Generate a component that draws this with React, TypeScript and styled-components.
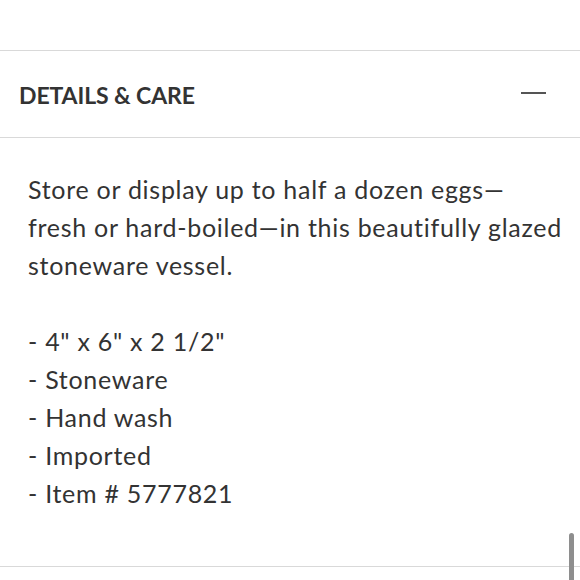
import React from "react";
import styled, { createGlobalStyle } from "styled-components";

const Global = createGlobalStyle`
  html, body { margin: 0; padding: 0; background: #fff; }
  body { font-family: Lato, "Open Sans", sans-serif; color: #333; overflow: hidden; }
`;

const Page = styled.div`
  width: 580px;
  height: 580px;
  position: relative;
  overflow: hidden;
  padding-top: 50px;
  box-sizing: border-box;
`;

const Section = styled.section`
  border-top: 1px solid #d9d9d9;
  border-bottom: 1px solid #d9d9d9;
`;

const Header = styled.div`
  height: 87px;
  display: flex;
  align-items: center;
  justify-content: space-between;
  padding: 1px 34px 0 19px;
  box-sizing: border-box;
  border-bottom: 1px solid #d9d9d9;
`;

const Title = styled.h2`
  margin: 0;
  font-size: 23px;
  font-weight: 700;
  letter-spacing: -0.1px;
  color: #333;
`;

const Minus = styled.span`
  display: block;
  width: 25px;
  height: 2px;
  margin-top: -3px;
  background: #555;
`;

const Body = styled.div`
  padding: 32px 6px 22px 28px;
  font-size: 25px;
  line-height: 38px;
  letter-spacing: 0.72px;
  color: #333;
  white-space: pre-line;
  height: 428px;
  box-sizing: border-box;
`;

const Scrollbar = styled.div`
  position: absolute;
  right: 6px;
  top: 533px;
  width: 5px;
  height: 60px;
  border-radius: 3px;
  background: #8e8e8e;
`;

const text = `Store or display up to half a dozen eggs\u2014
fresh or hard-boiled\u2014in this beautifully glazed
stoneware vessel.

- 4" x 6" x 2 1/2"
- Stoneware
- Hand wash
- Imported
- Item # 5777821`;

export default function App() {
  return (
    <>
      <Global />
      <Page>
        <Section>
          <Header>
            <Title>DETAILS &amp; CARE</Title>
            <Minus />
          </Header>
          <Body>{text}</Body>
        </Section>
        <Scrollbar />
      </Page>
    </>
  );
}
